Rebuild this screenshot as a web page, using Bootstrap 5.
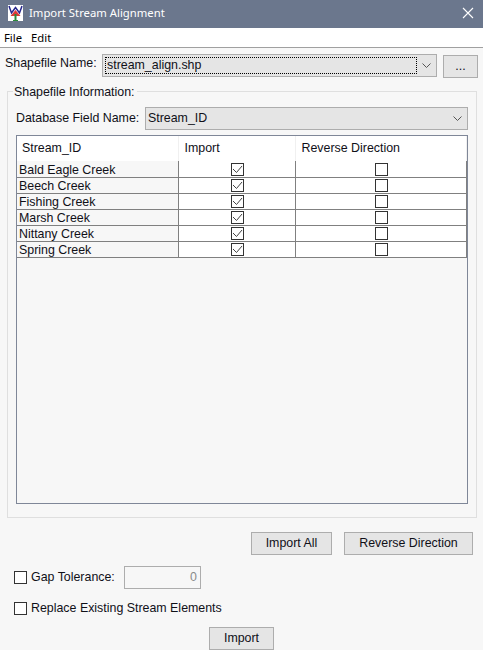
<!DOCTYPE html>
<html lang="en">
<head>
    <meta charset="UTF-8">
    <title>Import Stream Alignment</title>
    <link href="https://cdn.jsdelivr.net/npm/bootstrap@5.3.2/dist/css/bootstrap.min.css" rel="stylesheet">
    <style>
        html, body {
            height: 650px;
            overflow: hidden;
        }
        body {
            background-color: #f7f7f7;
            font-family: "Liberation Sans", Arial, sans-serif;
            font-size: 12.4px;
            line-height: 15px;
            color: #101018;
            white-space: nowrap;
        }
        .win-title {
            height: 28px;
            background-color: #6b778d;
            color: #fff;
            font-family: "Noto Sans", sans-serif;
            font-size: 11.3px;
            padding: 0 9px 3px 8px;
        }
        .app-logo {
            margin-right: 6px;
        }
        .win-menu {
            height: 20px;
            background-color: #fff;
            border-bottom: 1px solid #a0a0a0;
            font-family: "Noto Sans", sans-serif;
            font-size: 11.3px;
            padding-left: 4px;
            gap: 9px;
            color: #000;
        }
        .file-row {
            padding: 6px 5px 0 5px;
            height: 36px;
        }
        .file-label {
            width: 92px;
            margin-top: 2px;
        }
        .fake-combo {
            height: 23px;
            background-color: #e5e5e5;
            border: 1px solid #adadad;
            padding: 0 5px 0 2px;
        }
        .fake-combo svg {
            flex: none;
        }
        .file-combo {
            width: 335px;
            margin-left: 5px;
            padding: 2px 5px 2px 2px;
        }
        .dotted-box {
            border: 1px dotted #000;
            height: 17px;
            line-height: 15px;
            padding-left: 1px;
            margin-right: 5px;
        }
        .win-btn {
            height: 23px;
            background-color: #e5e5e5;
            border: 1px solid #adadad;
            border-radius: 0;
            padding: 0;
            font-size: 12.4px;
            line-height: 15px;
            color: #101018;
        }
        .dots-btn {
            width: 35px;
            margin-left: 6px;
            margin-top: 1px;
        }
        .info-box {
            position: relative;
            margin: 7px 7px 0 7px;
            width: 470px;
            height: 427px;
            border: 1px solid #dfdfdf;
            padding: 15px 8px 0 8px;
        }
        .info-legend {
            position: absolute;
            left: 5px;
            top: -7px;
            background-color: #f7f7f7;
            padding: 0 2px 0 1px;
        }
        .field-label {
            width: 129px;
        }
        .field-combo {
            width: 323px;
        }
        .grid-wrap {
            height: 369px;
            margin-top: 5px;
            border: 1px solid #7f8798;
        }
        .stream-table {
            table-layout: fixed;
            width: 449px;
            border-collapse: collapse;
        }
        .stream-table th {
            height: 25px;
            font-weight: 400;
            background-color: #fff;
            padding: 0 0 0 5px;
            border-right: 1px solid #f0f0f0;
        }
        .stream-table th + th {
            padding-left: 6px;
        }
        .stream-table td {
            height: 16px;
            padding: 0 0 0 2px;
            background-color: #fff;
            border-right: 1px solid #808080;
            border-bottom: 1px solid #808080;
            line-height: 14px;
            vertical-align: bottom;
        }
        .stream-table td:first-child {
            background-color: #f7f7f7;
        }
        .tick-box {
            display: block;
            margin: 0 auto 1px auto;
        }
        .action-row {
            padding: 14px 10px 0 0;
            gap: 12px;
        }
        .import-all-btn {
            width: 81px;
        }
        .reverse-btn {
            width: 129px;
        }
        .gap-row {
            padding: 11px 0 0 14px;
        }
        .gap-input {
            width: 77px;
            height: 23px;
            margin-left: 9px;
            border: 1px solid #adadad;
            color: #8a8a8a;
            padding-right: 3px;
            line-height: 21px;
        }
        .replace-row {
            padding: 12px 0 0 14px;
        }
        .box-label {
            margin-left: 4px;
        }
        .main-import-btn {
            width: 65px;
            margin-top: 11px;
        }
        .col-name {
            width: 161px;
        }
        .col-import {
            width: 117px;
        }
        .col-reverse {
            width: 171px;
        }
    </style>
</head>
<body>

<div class="win-title d-flex align-items-center">
    <svg width="15" height="16" viewBox="0 0 15 16" class="app-logo flex-shrink-0">
        <rect width="15" height="16" fill="#fff"/>
        <path d="M1 1l2.500 7L7.500 2.500 11.500 8 14 1" fill="none" stroke="#26268c" stroke-width="1.500"/>
        <path d="M2.500 11L7.500 5 12.500 11z" fill="#dc3a3a"/>
        <path d="M7.500 9v7" stroke="#2a8a3a" stroke-width="2"/>
        <path d="M5 15.500h5" stroke="#2a8a3a"/>
    </svg>
    <span>Import Stream Alignment</span>
    <svg width="12" height="12" viewBox="0 0 12 12" class="ms-auto">
        <path d="M1 1l10 10M11 1L1 11" stroke="#fff" stroke-width="1.100"/>
    </svg>
</div>

<div class="win-menu d-flex align-items-center">
    <span>File</span>
    <span>Edit</span>
</div>

<div class="file-row d-flex">
    <span class="file-label">Shapefile Name:</span>
    <div class="fake-combo file-combo d-flex align-items-center">
        <div class="dotted-box flex-grow-1">stream_align.shp</div>
        <svg width="9" height="5" viewBox="0 0 9 5"><path d="M.5 .5l4 4 4-4" fill="none" stroke="#555"/></svg>
    </div>
    <button type="button" class="btn win-btn dots-btn">...</button>
</div>

<div class="info-box">
    <span class="info-legend">Shapefile Information:</span>
    <div class="d-flex align-items-center">
        <span class="field-label">Database Field Name:</span>
        <div class="fake-combo field-combo d-flex align-items-center justify-content-between">
            <span>Stream_ID</span>
            <svg width="9" height="5" viewBox="0 0 9 5"><path d="M.5 .5l4 4 4-4" fill="none" stroke="#555"/></svg>
        </div>
    </div>
    <div class="grid-wrap">
        <table class="stream-table">
            <colgroup>
                <col class="col-name">
                <col class="col-import">
                <col class="col-reverse">
            </colgroup>
            <thead>
                <tr><th>Stream_ID</th><th>Import</th><th>Reverse Direction</th></tr>
            </thead>
            <tbody id="rows"></tbody>
        </table>
    </div>
</div>

<div class="action-row d-flex justify-content-end">
    <button type="button" class="btn win-btn import-all-btn">Import All</button>
    <button type="button" class="btn win-btn reverse-btn">Reverse Direction</button>
</div>

<div class="gap-row d-flex align-items-center">
    <svg width="13" height="13" viewBox="0 0 13 13"><rect x=".5" y=".5" width="12" height="12" fill="#fff" stroke="#333"/></svg>
    <span class="box-label">Gap Tolerance:</span>
    <div class="gap-input text-end">0</div>
</div>

<div class="replace-row d-flex align-items-center">
    <svg width="13" height="13" viewBox="0 0 13 13"><rect x=".5" y=".5" width="12" height="12" fill="#fff" stroke="#333"/></svg>
    <span class="box-label">Replace Existing Stream Elements</span>
</div>

<div class="d-flex justify-content-center">
    <button type="button" class="btn win-btn main-import-btn">Import</button>
</div>

<script>
    // grid rows
    const streams = ['Bald Eagle Creek', 'Beech Creek', 'Fishing Creek', 'Marsh Creek', 'Nittany Creek', 'Spring Creek'];
    const checked = '<svg class="tick-box" width="13" height="13" viewBox="0 0 13 13"><rect x=".5" y=".5" width="12" height="12" fill="#fff" stroke="#333"/><path d="M2 6l3.500 3.500L11 3" fill="none" stroke="#444"/></svg>';
    const empty = '<svg class="tick-box" width="13" height="13" viewBox="0 0 13 13"><rect x=".5" y=".5" width="12" height="12" fill="#fff" stroke="#333"/></svg>';
    document.getElementById('rows').innerHTML = streams.map(name =>
        `<tr><td>${name}</td><td>${checked}</td><td>${empty}</td></tr>`
    ).join('');
</script>

<script src="https://cdn.jsdelivr.net/npm/bootstrap@5.3.2/dist/js/bootstrap.bundle.min.js"></script>
</body>
</html>
